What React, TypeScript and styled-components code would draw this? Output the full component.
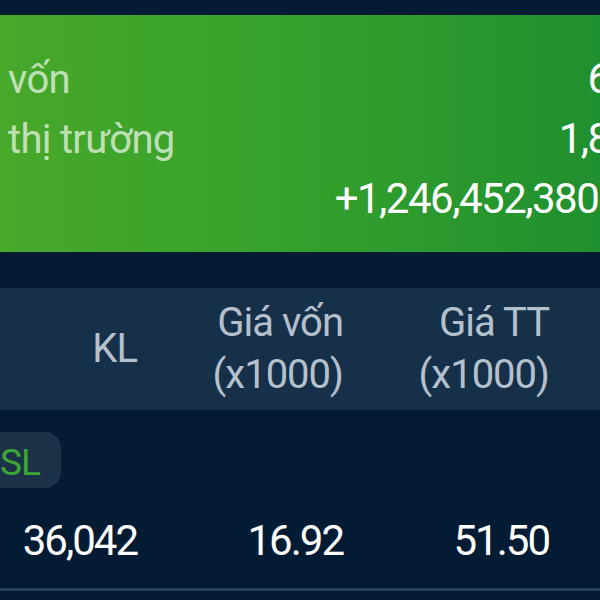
import React from 'react';
import styled, { createGlobalStyle } from 'styled-components';

const GlobalStyle = createGlobalStyle`
  html, body {
    margin: 0;
    padding: 0;
    width: 600px;
    height: 600px;
    overflow: hidden;
    background-color: #031c34;
    font-family: Roboto, "Noto Sans", sans-serif;
  }
`;

interface SummaryRow {
  label: string;
  value: string;
  note?: string;
}

interface Holding {
  volume: string;
  costPrice: string;
  marketPrice: string;
}

const summary: SummaryRow[] = [
  { label: 'vốn', value: '609,807,300' },
  { label: 'thị trường', value: '1,856,259,680' },
  { label: '', value: '+1,246,452,380', note: '(+204.40%)' },
];

const holding: Holding = {
  volume: '36,042',
  costPrice: '16.92',
  marketPrice: '51.50',
};

const App: React.FC = () => {
  return (
    <Page>
      <GlobalStyle />
      <ProfitCard>
        {summary.map((row, i) => (
          <SummaryLine key={i}>
            <SummaryLabel>{row.label}</SummaryLabel>
            <SummaryValue>
              {row.value}
              {row.note && <ValueNote>{row.note}</ValueNote>}
            </SummaryValue>
          </SummaryLine>
        ))}
      </ProfitCard>

      <TableHeader>
        <HeaderCell>KL</HeaderCell>
        <HeaderCell>
          Giá vốn
          <br />
          (x1000)
        </HeaderCell>
        <HeaderCell>
          Giá TT
          <br />
          (x1000)
        </HeaderCell>
      </TableHeader>

      <SymbolRow>
        <SymbolPill>SL</SymbolPill>
      </SymbolRow>

      <DataRow>
        <DataCell>{holding.volume}</DataCell>
        <DataCell>{holding.costPrice}</DataCell>
        <DataCell>{holding.marketPrice}</DataCell>
      </DataRow>
    </Page>
  );
};

export default App;

const Page = styled.div`
  width: 600px;
  height: 600px;
  padding-top: 15px;
  box-sizing: border-box;
  overflow: hidden;
`;

const ProfitCard = styled.section`
  width: 800px;
  box-sizing: border-box;
  padding: 34px 0 23px 8px;
  background: linear-gradient(90deg, #48a82a 0px, #34a02c 300px, #1f902f 600px, #1c8c30 800px);
`;

const SummaryLine = styled.div`
  display: flex;
  justify-content: space-between;
  align-items: baseline;
  height: 60px;
  line-height: 60px;
`;

const SummaryLabel = styled.span`
  font-size: 40px;
  color: rgba(255, 255, 255, 0.68);
  letter-spacing: -0.7px;
`;

const SummaryValue = styled.span`
  font-size: 42px;
  color: #ffffff;
  letter-spacing: -1.5px;
`;

const ValueNote = styled.span`
  margin-left: 4px;
`;

const TableHeader = styled.div`
  margin-top: 36px;
  height: 122px;
  display: flex;
  justify-content: flex-end;
  align-items: center;
  padding-right: 51px;
  background-color: #16304a;
`;

const HeaderCell = styled.div`
  width: 206px;
  flex-shrink: 0;
  text-align: right;
  font-size: 40px;
  line-height: 52px;
  letter-spacing: -1px;
  color: #b4c1cd;
`;

const SymbolRow = styled.div`
  height: 80px;
  padding-top: 22px;
  box-sizing: border-box;
`;

const SymbolPill = styled.span`
  display: inline-block;
  margin-left: -20px;
  padding: 3px 21px 0 20px;
  height: 56px;
  box-sizing: border-box;
  line-height: 56px;
  font-size: 37px;
  letter-spacing: -1px;
  color: #3fa535;
  background-color: #1b3248;
  border-radius: 16px;
`;

const DataRow = styled.div`
  display: flex;
  justify-content: flex-end;
  padding: 25px 51px 21px 0;
  border-bottom: 3px solid #27425c;
`;

const DataCell = styled.div`
  width: 206px;
  flex-shrink: 0;
  text-align: right;
  font-size: 42px;
  line-height: 52px;
  letter-spacing: -2px;
  color: #ffffff;
`;
